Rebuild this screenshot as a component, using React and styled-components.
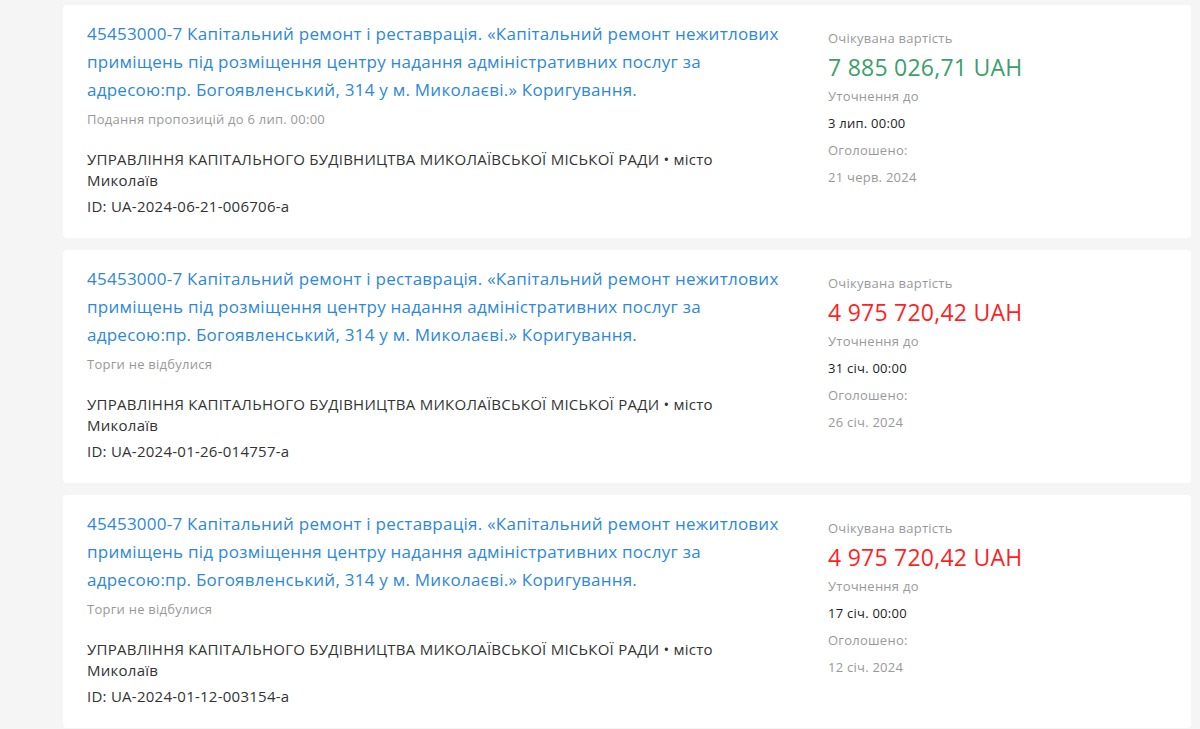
import styled, { createGlobalStyle } from "styled-components";

const tenders = [
  {
    id: "UA-2024-06-21-006706-a",
    status: "Подання пропозицій до 6 лип. 00:00",
    amount: "7 885 026,71 UAH",
    active: true,
    until: "3 лип. 00:00",
    published: "21 черв. 2024",
  },
  {
    id: "UA-2024-01-26-014757-a",
    status: "Торги не відбулися",
    amount: "4 975 720,42 UAH",
    active: false,
    until: "31 січ. 00:00",
    published: "26 січ. 2024",
  },
  {
    id: "UA-2024-01-12-003154-a",
    status: "Торги не відбулися",
    amount: "4 975 720,42 UAH",
    active: false,
    until: "17 січ. 00:00",
    published: "12 січ. 2024",
  },
];

const title =
  "45453000-7 Капітальний ремонт і реставрація. «Капітальний ремонт нежитлових приміщень під розміщення центру надання адміністративних послуг за адресою:пр. Богоявленський, 314 у м. Миколаєві.» Коригування.";

const org = "УПРАВЛІННЯ КАПІТАЛЬНОГО БУДІВНИЦТВА МИКОЛАЇВСЬКОЇ МІСЬКОЇ РАДИ";

const App = () => {
  return (
    <>
      <GlobalStyle />
      <List>
        {tenders.map((t) => (
          <Card key={t.id}>
            <Main>
              <Title href="#">{title}</Title>
              <Status>{t.status}</Status>
              <Org>
                {org} • місто Миколаїв
              </Org>
              <TenderId>ID: {t.id}</TenderId>
            </Main>
            <Side>
              <Label>Очікувана вартість</Label>
              <Amount $active={t.active}>{t.amount}</Amount>
              <Label>Уточнення до</Label>
              <Value>{t.until}</Value>
              <Label>Оголошено:</Label>
              <Label>{t.published}</Label>
            </Side>
          </Card>
        ))}
      </List>
    </>
  );
};

const GlobalStyle = createGlobalStyle`
  body {
    margin: 0;
    background: #f5f5f5;
    font-family: "Open Sans", "Noto Sans", sans-serif;
    letter-spacing: 0.25px;
  }
`;

const List = styled.div`
  display: flex;
  flex-direction: column;
  gap: 12px;
  padding: 5px 9px 0 63px;
`;

const Card = styled.div`
  display: grid;
  grid-template-columns: 1fr 339px;
  column-gap: 41px;
  background: #fff;
  border-radius: 4px;
  padding: 15px 24px 22px 24px;
`;

const Main = styled.div`
  display: flex;
  flex-direction: column;
`;

const Title = styled.a`
  font-size: 17px;
  line-height: 28px;
  color: #2d88d9;
  text-decoration: none;
`;

const Status = styled.div`
  margin-top: 5px;
  font-size: 13px;
  line-height: 20px;
  color: #999;
`;

const Org = styled.div`
  margin-top: 20px;
  font-size: 15px;
  line-height: 20.5px;
  color: #333;
`;

const TenderId = styled.div`
  margin-top: 6px;
  font-size: 15px;
  line-height: 20px;
  color: #333;
`;

const Side = styled.div`
  display: flex;
  flex-direction: column;
  padding-top: 4.5px;
`;

const Label = styled.div`
  font-size: 13px;
  line-height: 27px;
  color: #999;
`;

const Value = styled(Label)`
  color: #222;
`;

const Amount = styled.div`
  font-size: 23px;
  line-height: 31px;
  color: ${(p) => (p.$active ? "#3aa06a" : "#ff1f1f")};
`;

export default App;
